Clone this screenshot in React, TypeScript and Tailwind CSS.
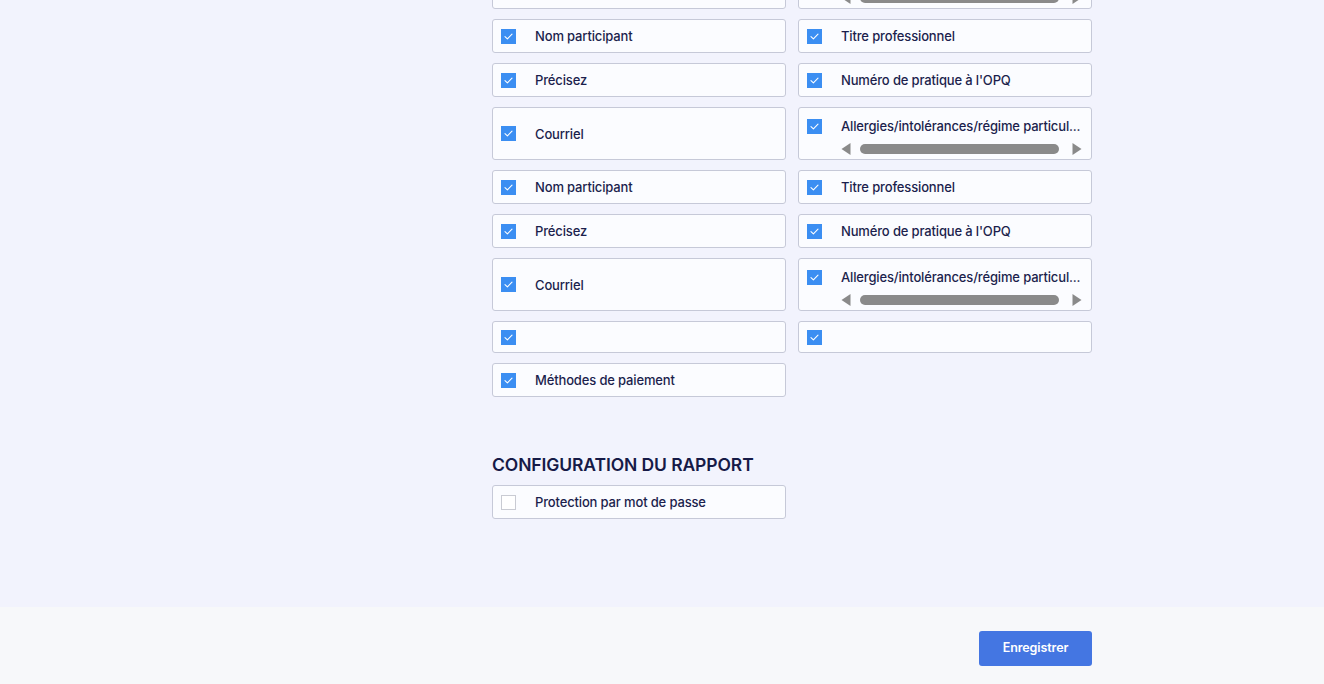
import React from "react";

const font = { fontFamily: "Inter, 'Noto Sans', sans-serif" };

function Check({ checked = true }: { checked?: boolean }) {
  if (!checked) {
    return <div className="w-[15px] h-[15px] shrink-0 border border-[#c9cbd3] bg-white" />;
  }
  return (
    <div className="w-[15px] h-[15px] shrink-0 bg-[#3b8ef2] flex items-center justify-center">
      <svg width="9" height="7" viewBox="0 0 9 7" fill="none">
        <path d="M1 3.6 L3.4 5.8 L8 1.2" stroke="white" strokeWidth="1.1" strokeLinecap="round" strokeLinejoin="round" />
      </svg>
    </div>
  );
}

function Row({ label, checked = true, h = "h-[34px]" }: { label?: string; checked?: boolean; h?: string }) {
  return (
    <div className={`${h} rounded-[3px] border border-[#c6c9d8] bg-[#fbfcff] flex items-center pl-[8px]`}>
      <Check checked={checked} />
      <span className="ml-[19px] mt-[2px] text-[13px] font-medium tracking-[-0.15px] text-[#1b1f4d] whitespace-nowrap">{label}</span>
    </div>
  );
}

function ScrollRow({ label }: { label: string }) {
  return (
    <div className="h-[53px] rounded-[3px] border border-[#c6c9d8] bg-[#fbfcff] flex items-start pl-[8px] pt-[11px]">
      <Check />
      <div className="ml-[19px] flex flex-col">
        <span className="h-[14px] text-[13px] font-medium tracking-[-0.15px] text-[#1b1f4d] whitespace-nowrap leading-[14px]">{label}</span>
        <div className="mt-[10px] flex items-center w-[241px]">
          <svg width="10" height="12" viewBox="0 0 10 12" className="shrink-0">
            <path d="M9.5 0 L0.5 6 L9.5 12 Z" fill="#8a8a8a" />
          </svg>
          <div className="ml-[9px] h-[10px] w-[199px] rounded-full bg-[#8a8a8a]" />
          <svg width="10" height="12" viewBox="0 0 10 12" className="ml-auto shrink-0">
            <path d="M0.5 0 L9.5 6 L0.5 12 Z" fill="#8a8a8a" />
          </svg>
        </div>
      </div>
    </div>
  );
}

export default function App() {
  return (
    <div className="w-[1324px] h-[684px] overflow-hidden bg-[#f2f3fd]" style={font}>
      <div className="h-[607px] overflow-hidden">
        <div className="ml-[492px] w-[600px] mt-[-44px]">
          <div className="grid grid-cols-2 gap-x-[12px] gap-y-[10px]">
            <Row label="" h="h-[53px]" />
            <ScrollRow label="" />
            <Row label="Nom participant" />
            <Row label="Titre professionnel" />
            <Row label="Précisez" />
            <Row label="Numéro de pratique à l'OPQ" />
            <Row label="Courriel" h="h-[53px]" />
            <ScrollRow label="Allergies/intolérances/régime particul..." />
            <Row label="Nom participant" />
            <Row label="Titre professionnel" />
            <Row label="Précisez" />
            <Row label="Numéro de pratique à l'OPQ" />
            <Row label="Courriel" h="h-[53px]" />
            <ScrollRow label="Allergies/intolérances/régime particul..." />
            <Row label="" h="h-[32px]" />
            <Row label="" h="h-[32px]" />
            <Row label="Méthodes de paiement" />
          </div>
          <h2 className="mt-[57px] text-[17.5px] font-semibold text-[#161a47] leading-[22px] tracking-[-0.1px]">
            CONFIGURATION DU RAPPORT
          </h2>
          <div className="mt-[9px] grid grid-cols-2 gap-x-[12px]">
            <Row label="Protection par mot de passe" checked={false} />
          </div>
        </div>
      </div>
      <div className="h-[77px] bg-[#f7f8fa] flex items-start">
        <div className="ml-[979px] mt-[24px]">
          <button className="w-[113px] h-[35px] rounded-[3px] bg-[#4476e2] text-white text-[12.5px] font-semibold tracking-[-0.1px]">
            Enregistrer
          </button>
        </div>
      </div>
    </div>
  );
}
